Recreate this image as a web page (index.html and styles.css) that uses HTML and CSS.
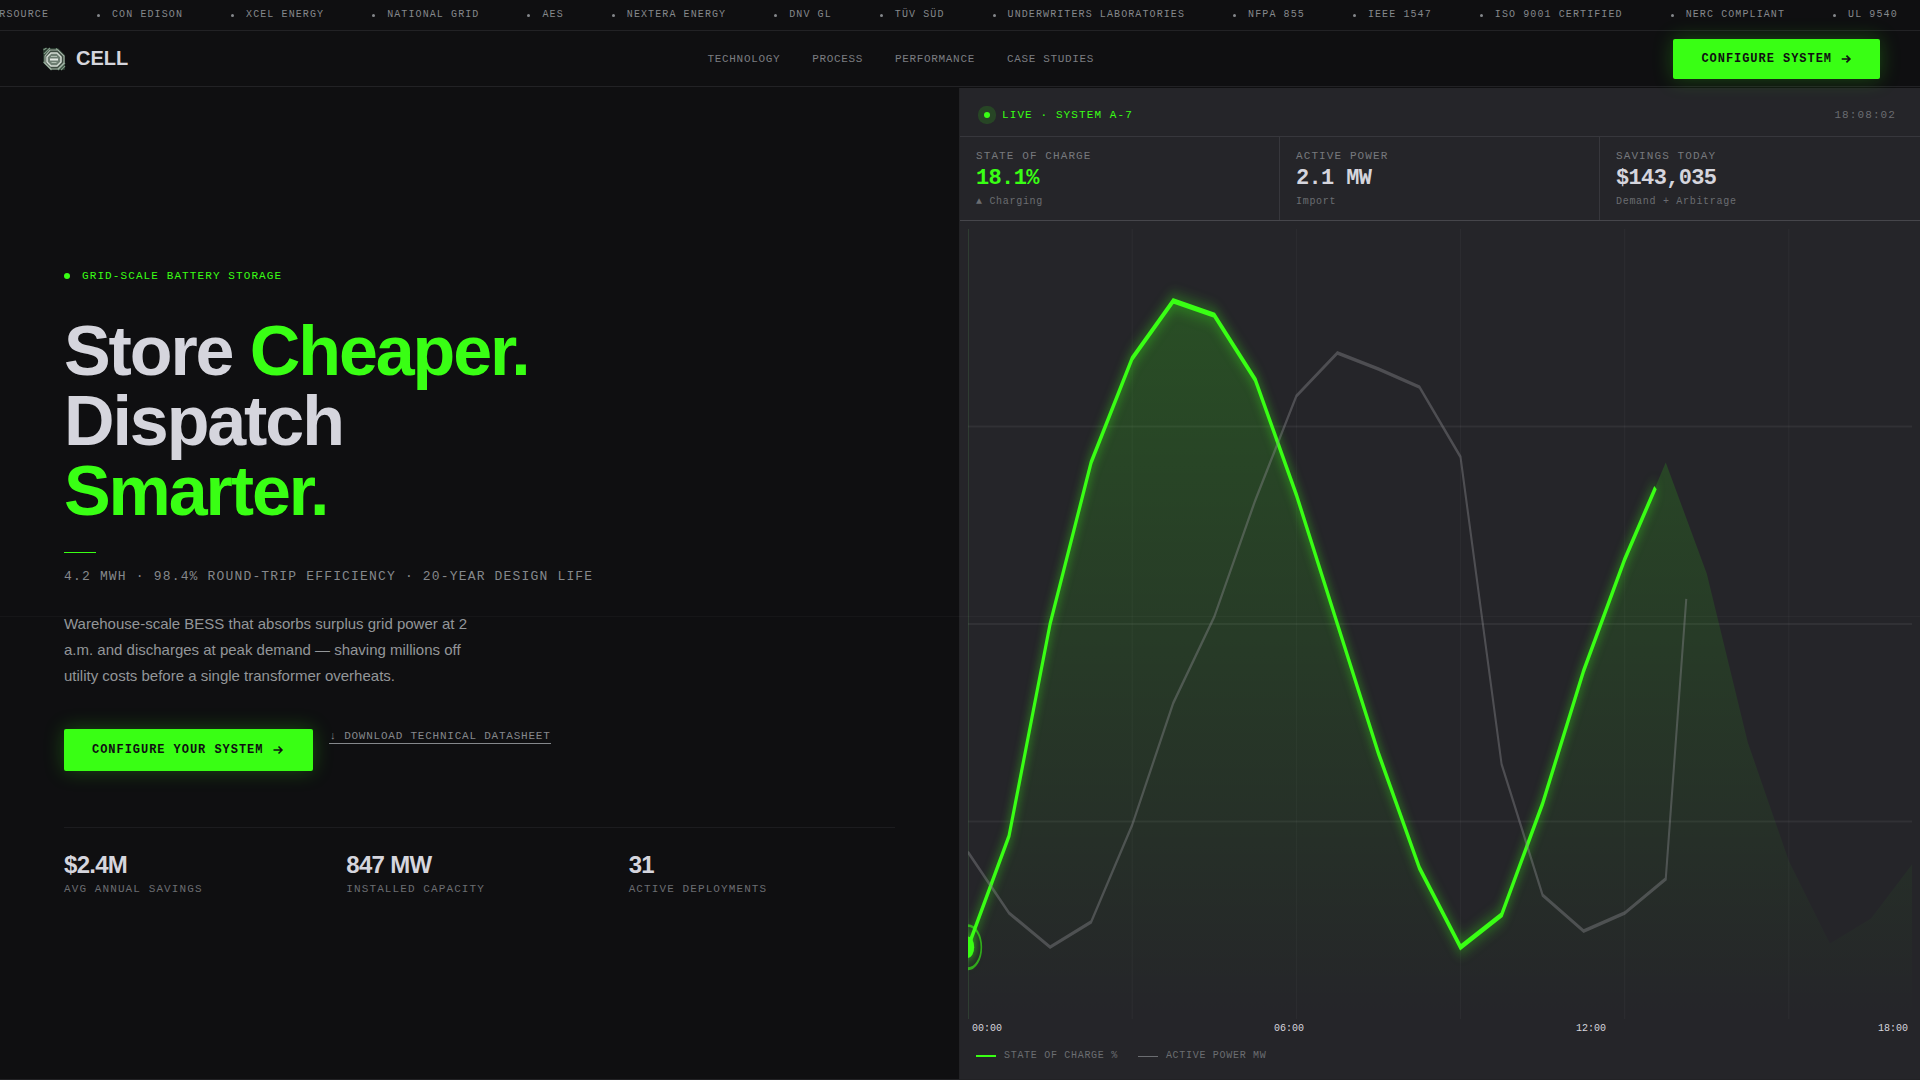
FILE: index.html
```html
<!DOCTYPE html>
<html lang="en">
<head>
<meta charset="utf-8">
<meta name="viewport" content="width=device-width, initial-scale=1">
<title>CELL — Grid-Scale Battery Storage</title>
<link rel="stylesheet" href="styles.css">
</head>
<body>
<div class="ticker">
  <ul class="ticker-track">
    <li>EVERSOURCE</li>
    <li>CON EDISON</li>
    <li>XCEL ENERGY</li>
    <li>NATIONAL GRID</li>
    <li>AES</li>
    <li>NEXTERA ENERGY</li>
    <li>DNV GL</li>
    <li>TÜV SÜD</li>
    <li>UNDERWRITERS LABORATORIES</li>
    <li>NFPA 855</li>
    <li>IEEE 1547</li>
    <li>ISO 9001 CERTIFIED</li>
    <li>NERC COMPLIANT</li>
    <li>UL 9540</li>
  </ul>
</div>

<header class="nav">
  <a class="brand" href="#">
    <svg class="brand-mark" viewBox="0 0 28 28" aria-hidden="true">
      <path d="M3 3h15l7 7v15H11l-8-8z" fill="#26352b"/>
      <path d="M4 9l6-6M3.500 5l3-2M18 25l7-7M21 25l4-4M16 3.500l8 8M3.500 17l8 8" stroke="#7f9a86" stroke-width="1.200" fill="none"/>
      <path d="M10 5h8l6 6v7l-6 6h-7l-6-6v-7z" fill="#3c4a40" stroke="#a3b3a6" stroke-width="1.200"/>
      <path d="M11 8h6l4 4v5l-4 4h-6l-4-4v-5z" fill="#6d7d72" stroke="#d5ddd5" stroke-width="1.500"/>
      <path d="M10 14.500h8" stroke="#e4eae4" stroke-width="2"/>
      <path d="M11 11.500h6M11.500 17.500h5" stroke="#aebcb0" stroke-width="1"/>
    </svg>
    <span>CELL</span>
  </a>
  <nav class="nav-links">
    <a href="#technology">TECHNOLOGY</a>
    <a href="#process">PROCESS</a>
    <a href="#performance">PERFORMANCE</a>
    <a href="#cases">CASE STUDIES</a>
  </nav>
  <button class="cta" type="button">CONFIGURE SYSTEM
    <svg class="arrow" viewBox="0 0 14 14" aria-hidden="true"><path d="M2 7h9.500M7.500 3l4 4-4 4"/></svg>
  </button>
</header>

<main class="hero">
  <section class="intro">
    <p class="eyebrow"><span class="dot"></span>GRID-SCALE BATTERY STORAGE</p>
    <h1>Store <em>Cheaper.</em><br>Dispatch<br><em>Smarter.</em></h1>
    <div class="rule"></div>
    <p class="specs">4.2 MWH · 98.4% ROUND-TRIP EFFICIENCY · 20-YEAR DESIGN LIFE</p>
    <p class="lede">Warehouse-scale BESS that absorbs surplus grid power at 2 a.m. and discharges at peak demand — shaving millions off utility costs before a single transformer overheats.</p>
    <div class="actions">
      <button class="cta cta-large" type="button">CONFIGURE YOUR SYSTEM
        <svg class="arrow" viewBox="0 0 14 14" aria-hidden="true"><path d="M2.500 7h8.500M7.500 3.500l3.500 3.500-3.500 3.500"/></svg>
      </button>
      <a class="datasheet" href="#datasheet">↓ DOWNLOAD TECHNICAL DATASHEET</a>
    </div>
    <dl class="stats">
      <div><dd>$2.4M</dd><dt>AVG ANNUAL SAVINGS</dt></div>
      <div><dd>847 MW</dd><dt>INSTALLED CAPACITY</dt></div>
      <div><dd>31</dd><dt>ACTIVE DEPLOYMENTS</dt></div>
    </dl>
  </section>

  <section class="panel">
    <div class="panel-head">
      <span class="live"><span class="dot dot-halo"></span>LIVE · SYSTEM A-7</span>
      <time>18:08:02</time>
    </div>
    <dl class="metrics">
      <div>
        <dt>STATE OF CHARGE</dt>
        <dd class="value value-green">18.1%</dd>
        <dd class="note">▲ Charging</dd>
      </div>
      <div>
        <dt>ACTIVE POWER</dt>
        <dd class="value">2.1 MW</dd>
        <dd class="note">Import</dd>
      </div>
      <div>
        <dt>SAVINGS TODAY</dt>
        <dd class="value">$143,035</dd>
        <dd class="note">Demand + Arbitrage</dd>
      </div>
    </dl>
    <div class="chart">
      <svg viewBox="0 0 460 220" preserveAspectRatio="none" role="img" aria-label="State of charge and active power over the day">
        <defs>
          <linearGradient id="charge-fill" x1="0" y1="0" x2="0" y2="1">
            <stop offset="0" stop-color="#39ff14" stop-opacity="0.19"/>
            <stop offset="1" stop-color="#39ff14" stop-opacity="0"/>
          </linearGradient>
        </defs>
        <path class="grid-h" d="M0 55H460M0 110H460M0 165H460"/>
        <path class="grid-v" d="M80 0V220M160 0V220M240 0V220M320 0V220M400 0V220"/>
        <path class="axis-v" d="M0 0V220"/>
        <path fill="url(#charge-fill)" d="M0 200L20 169L40 110L60 65L80 36L100 20L120 24L140 42L160 74L180 110L200 146L220 178L240 200L260 191L280 160L300 123L320 92L340 65L360 96L380 143L400 176L420 199L440 192L460 177V220H0Z"/>
        <path class="charge" d="M0 200L20 169L40 110L60 65L80 36L100 20L120 24L140 42L160 74L180 110L200 146L220 178L240 200L260 191L280 160L300 123L320 92L335 72"/>
        <path class="power" d="M0 173.500L20 190.500L40 200L60 193L80 166L100 132L120 108L140 75.500L160 46.500L180 34.500L200 39L220 44L240 63.500L260 149L280 185.500L300 195.500L320 190.500L340 181L350 103"/>
        <circle class="now" cx="0" cy="200" r="3"/>
        <ellipse class="now-ring" cx="0" cy="200" rx="6.500" ry="6"/>
      </svg>
    </div>
    <div class="hours"><span>00:00</span><span>06:00</span><span>12:00</span><span>18:00</span></div>
    <ul class="legend">
      <li><span class="swatch"></span>STATE OF CHARGE %</li>
      <li><span class="swatch swatch-gray"></span>ACTIVE POWER MW</li>
    </ul>
  </section>
  <div class="scanline"></div>
</main>
</body>
</html>
```
FILE: styles.css
```css
:root {
  --bg: #0f0f11;
  --panel: #252529;
  --line: #222225;
  --green: #39ff14;
  --text: #d5d5dd;
  --muted: #85888c;
  --dim: #6b6d71;
  --sans: "Liberation Sans", Arial, sans-serif;
  --mono: "Liberation Mono", "Courier New", monospace;
}

* { box-sizing: border-box; }

body, h1, p, ul, dl, dd { margin: 0; padding: 0; }
ul { list-style: none; }
a { color: inherit; text-decoration: none; }

body {
  display: flex;
  flex-direction: column;
  min-height: 100vh;
  background: var(--bg);
  color: var(--text);
  font-family: var(--sans);
}

/* Ticker */
.ticker {
  overflow: hidden;
  border-bottom: 1px solid var(--line);
}

.ticker-track {
  display: flex;
  gap: 48px;
  width: max-content;
  margin-left: -37px;
  padding: 7px 0;
  color: var(--muted);
  font: 10px/16px var(--mono);
  letter-spacing: 0.11em;
}

.ticker-track li {
  display: flex;
  align-items: center;
  gap: 12px;
  white-space: nowrap;
}

.ticker-track li::before {
  content: "";
  width: 3px;
  height: 3px;
  border-radius: 50%;
  background: var(--muted);
}

/* Navigation */
.nav {
  position: relative;
  z-index: 2;
  display: flex;
  align-items: center;
  justify-content: space-between;
  height: 56px;
  padding: 0 40px;
  border-bottom: 1px solid var(--line);
}

.brand {
  display: flex;
  align-items: center;
  gap: 8px;
  font-size: 20px;
  font-weight: 700;
}

.brand-mark { width: 28px; height: 28px; }

.nav-links {
  display: flex;
  gap: 32px;
  color: #7b7d81;
  font: 11px/16px var(--mono);
  letter-spacing: 0.06em;
}

.cta {
  display: inline-flex;
  align-items: center;
  gap: 8px;
  padding: 13px 28px;
  border: 0;
  border-radius: 2px;
  background: var(--green);
  box-shadow: 0 0 20px rgba(57, 255, 20, 0.25);
  color: var(--bg);
  font: 700 12px/14px var(--mono);
  letter-spacing: 0.08em;
  white-space: nowrap;
  cursor: pointer;
}

.cta-large { padding: 14px 28px; }

.arrow {
  width: 12px;
  height: 12px;
  fill: none;
  stroke: currentColor;
  stroke-width: 2;
}

.cta-large .arrow {
  width: 14px;
  height: 14px;
  stroke-width: 1.5;
}

/* Hero */
.hero {
  position: relative;
  flex: 1;
  display: grid;
  grid-template-columns: calc(50% - 1px) 1fr;
  margin-top: 1px;
  border-bottom: 1px solid var(--line);
}

.intro {
  display: flex;
  flex-direction: column;
  justify-content: center;
  padding: 48px 64px;
}

.dot {
  width: 6px;
  height: 6px;
  border-radius: 50%;
  background: var(--green);
}

.eyebrow, .live {
  display: flex;
  align-items: center;
  gap: 12px;
  color: var(--green);
  font: 11px/16px var(--mono);
  letter-spacing: 0.1em;
}

h1 {
  margin-top: 32px;
  font-size: 70px;
  line-height: 70px;
  letter-spacing: -0.03em;
}

h1 em { color: var(--green); font-style: normal; }

.rule {
  width: 32px;
  height: 1px;
  margin: 26px 0 14px;
  background: var(--green);
}

.specs {
  color: var(--muted);
  font: 13px/20px var(--mono);
  letter-spacing: 0.09em;
}

.lede {
  max-width: 420px;
  margin-top: 24px;
  color: #939699;
  font-size: 15px;
  line-height: 26px;
}

.actions {
  display: flex;
  align-items: flex-start;
  gap: 16px;
  margin-top: 40px;
}

.datasheet {
  border-bottom: 1px solid var(--muted);
  color: var(--muted);
  font: 11px/14px var(--mono);
  letter-spacing: 0.07em;
}

.stats {
  display: grid;
  grid-template-columns: repeat(3, 1fr);
  gap: 16px;
  margin-top: 56px;
  padding-top: 23px;
  border-top: 1px solid #1c1c1f;
}

.stats div { display: flex; flex-direction: column; gap: 2px; }

.stats dd {
  font-size: 24px;
  font-weight: 700;
  line-height: 28px;
  letter-spacing: -0.03em;
}

.stats dt {
  color: var(--dim);
  font: 11px/16px var(--mono);
  letter-spacing: 0.1em;
}

.intro { padding-bottom: 50px; }

/* Live panel */
.panel {
  display: flex;
  flex-direction: column;
  min-width: 0;
  border-left: 1px solid var(--line);
  background: var(--panel);
}

.panel-head {
  display: flex;
  align-items: center;
  justify-content: space-between;
  height: 49px;
  padding: 6px 24px 0;
  border-bottom: 1px solid #37373c;
}

.dot-halo { box-shadow: 0 0 0 6px rgba(57, 255, 20, 0.15); }

.panel-head time {
  color: var(--dim);
  font: 11px/16px var(--mono);
  letter-spacing: 0.1em;
}

.metrics {
  display: grid;
  grid-template-columns: repeat(3, 1fr);
  border-bottom: 1px solid #46464b;
}

.metrics div {
  display: flex;
  flex-direction: column;
  gap: 2px;
  padding: 12px 16px 11px;
}

.metrics div:not(:last-child) { border-right: 1px solid #37373c; }

.metrics dt {
  color: #77797d;
  font: 11px/14px var(--mono);
  letter-spacing: 0.1em;
}

.metrics .value {
  font: 700 22px/28px var(--mono);
  letter-spacing: -0.03em;
}

.metrics .value-green { color: var(--green); }

.metrics .note {
  color: var(--dim);
  font: 10px/14px var(--mono);
  letter-spacing: 0.07em;
}

.chart {
  flex: 1;
  display: grid;
  min-height: 320px;
  padding: 8px 8px 0;
}

.chart svg {
  width: 100%;
  height: 100%;
  min-height: 0;
  overflow: hidden;
  contain: size;
}

.grid-h, .grid-v, .axis-v { fill: none; stroke-width: 0.5; }
.grid-h { stroke: rgba(255, 255, 255, 0.06); }
.grid-v { stroke: rgba(255, 255, 255, 0.04); }
.axis-v { stroke: rgba(110, 200, 110, 0.3); }

.charge {
  fill: none;
  stroke: var(--green);
  stroke-width: 1.5;
  filter: drop-shadow(0 0 2px rgba(57, 255, 20, 0.7));
}

.power {
  fill: none;
  stroke: rgba(140, 140, 145, 0.4);
  stroke-width: 1;
}

.now {
  fill: var(--green);
  filter: drop-shadow(0 0 2px rgba(57, 255, 20, 0.7));
}

.now-ring {
  fill: none;
  stroke: var(--green);
  stroke-opacity: 0.6;
  stroke-width: 0.8;
}

.hours {
  display: flex;
  justify-content: space-between;
  padding: 3px 12px 1px;
  font: 10px/14px var(--mono);
}

.legend {
  display: flex;
  gap: 20px;
  padding: 12px 16px 16px;
  color: var(--dim);
  font: 10px/14px var(--mono);
  letter-spacing: 0.07em;
}

.legend li { display: flex; align-items: center; gap: 8px; }

.swatch {
  width: 20px;
  height: 2px;
  background: var(--green);
}

.swatch-gray { height: 1px; background: var(--dim); }

/* Faint sweep line across the hero */
.scanline {
  position: absolute;
  top: 53.3%;
  left: 0;
  right: 0;
  height: 1px;
  background: rgba(255, 255, 255, 0.03);
  pointer-events: none;
}
```
